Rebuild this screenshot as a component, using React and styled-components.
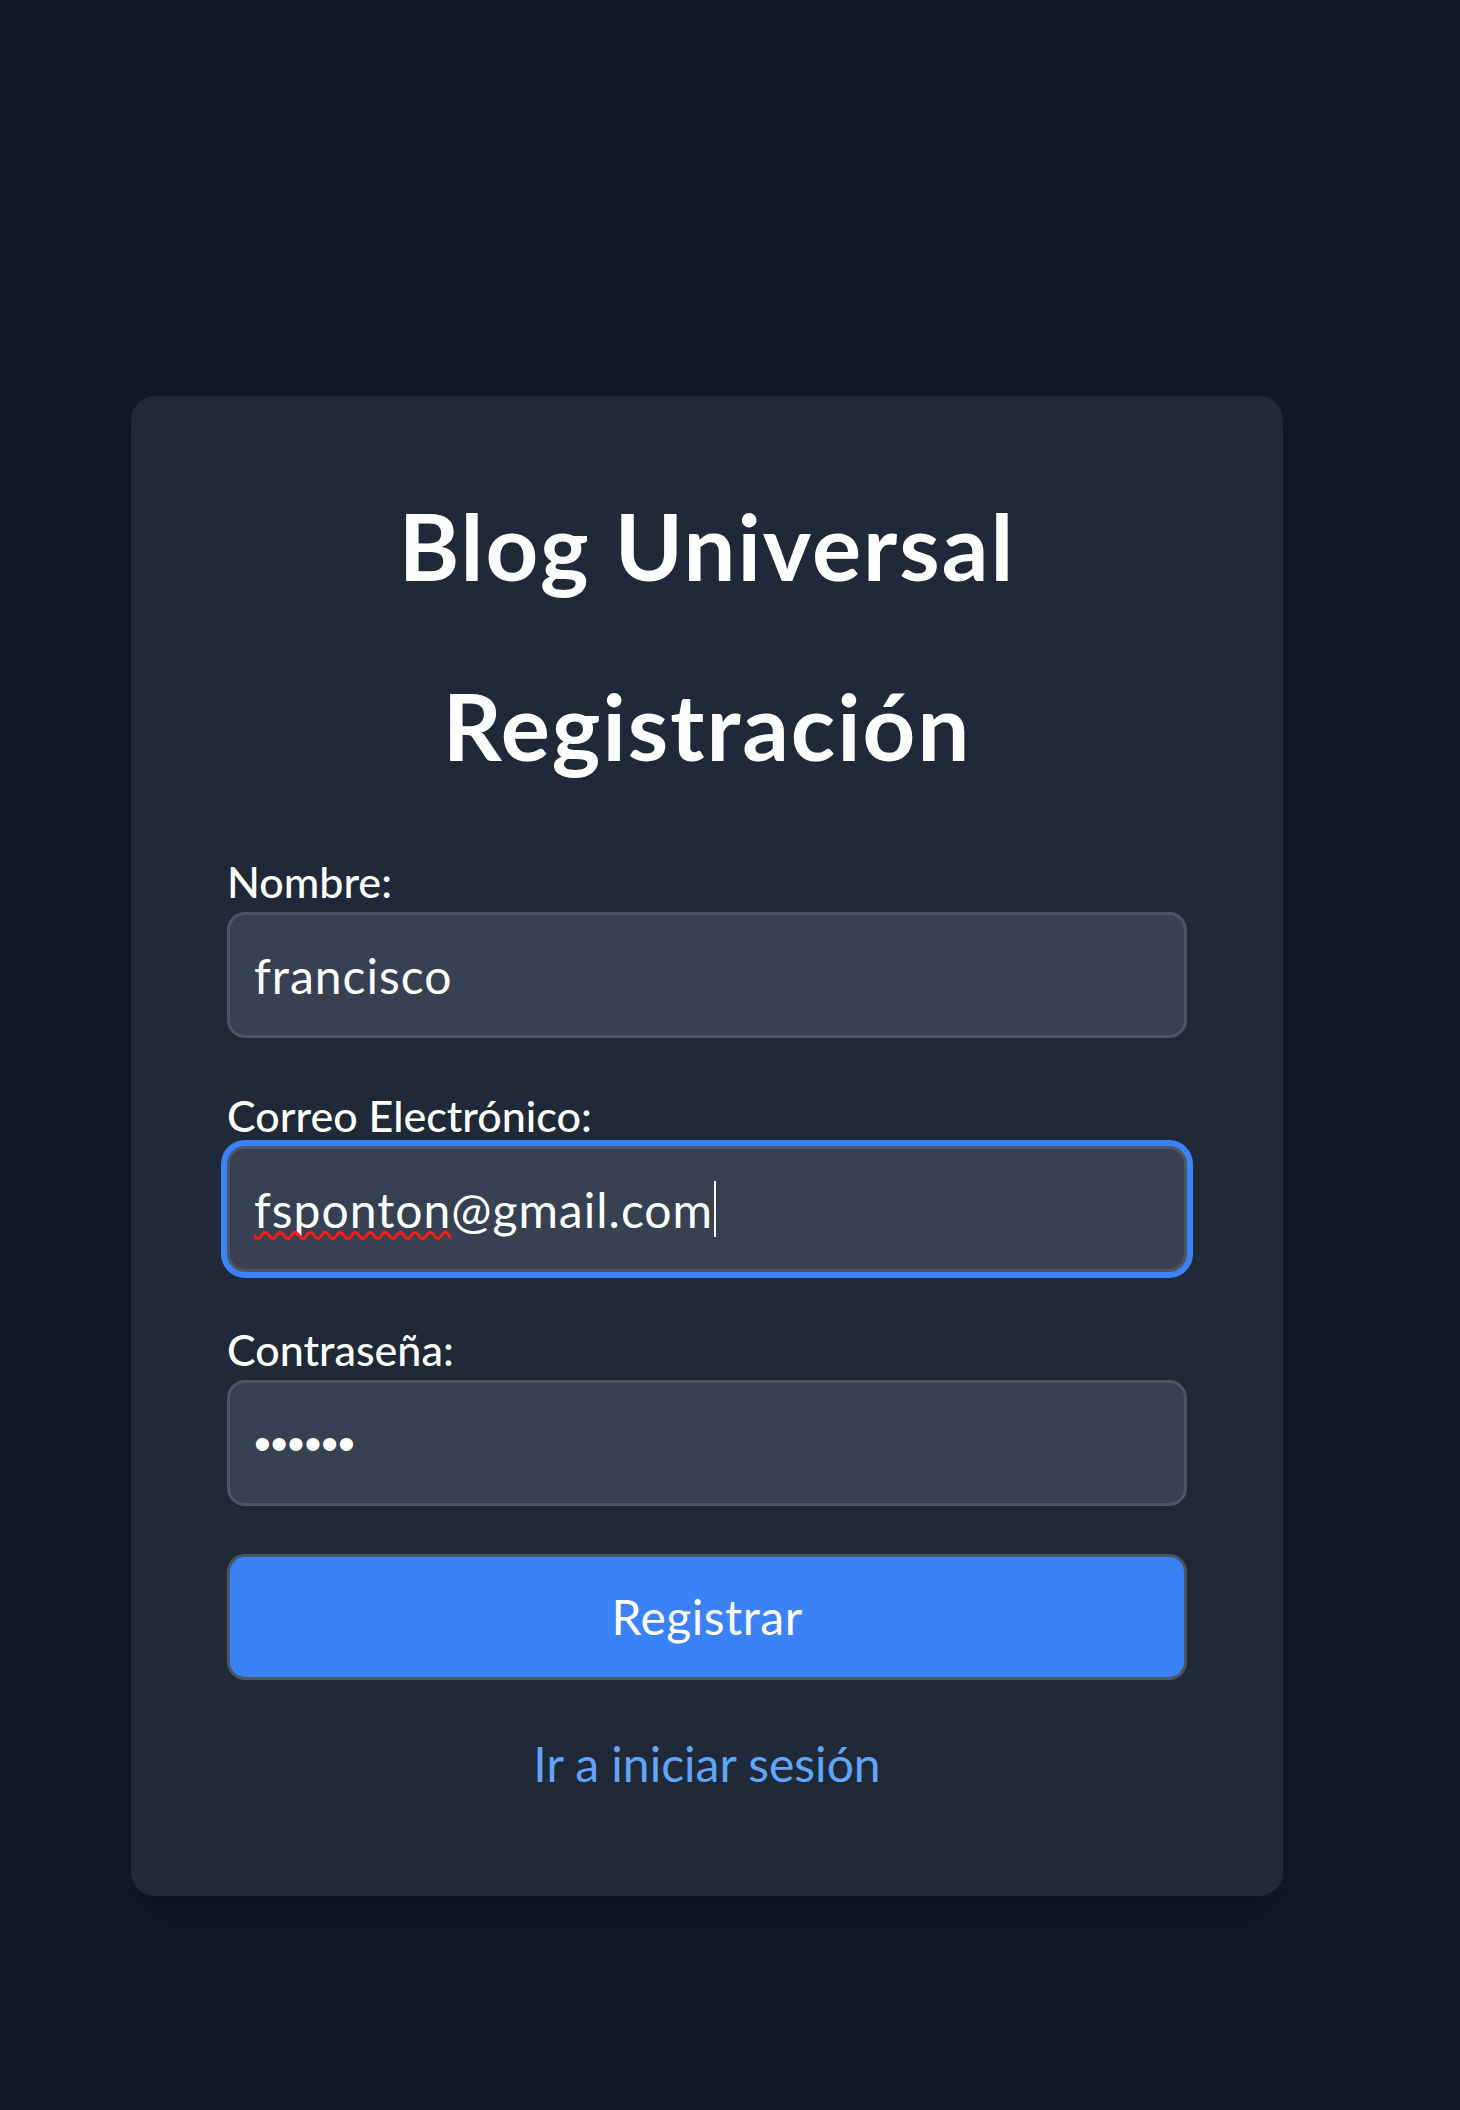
import styled, { createGlobalStyle } from 'styled-components';

const GlobalStyle = createGlobalStyle`
  * {
    box-sizing: border-box;
  }
  html,
  body {
    margin: 0;
    padding: 0;
    background: #111827;
  }
  body {
    font-family: 'Lato', 'Liberation Sans', sans-serif;
    color: #ffffff;
  }
`;

const Page = styled.div`
  min-height: 2110px;
  padding: 396px 0 0 131px;
  background: #111827;
`;

const Card = styled.div`
  width: 1152px;
  padding: 96px;
  background: #1f2937;
  border-radius: 24px;
  box-shadow: 0 30px 45px -9px rgb(0 0 0 / 12%), 0 12px 18px -12px rgb(0 0 0 / 12%);
`;

const Title = styled.h1`
  margin: 0 0 72px;
  font-size: 92px;
  line-height: 108px;
  font-weight: 700;
  letter-spacing: 2px;
  text-align: center;
  color: #ffffff;
`;

const Form = styled.form`
  display: flex;
  flex-direction: column;
`;

const Field = styled.div`
  margin-bottom: 48px;
`;

const Label = styled.label`
  display: block;
  font-size: 43px;
  line-height: 60px;
  font-weight: 500;
  color: #ffffff;
`;

const InputWrap = styled.div`
  position: relative;
`;

const Input = styled.input`
  display: block;
  width: 100%;
  height: 126px;
  padding: 24px;
  font-family: ${(p) => (p.type === 'password' ? "'Liberation Sans', sans-serif" : 'inherit')};
  font-size: 48px;
  line-height: 72px;
  letter-spacing: ${(p) => (p.type === 'password' ? '0' : '1px')};
  color: #ffffff;
  background: #374151;
  border: 3px solid #4b5563;
  border-radius: 18px;
  outline: none;
  box-shadow: ${(p) => (p.$focused ? '0 0 0 6px #3b82f6' : 'none')};
`;

/* spell-check squiggle + caret drawn over the focused e-mail field */
const TypedOverlay = styled.span`
  position: absolute;
  left: 27px;
  top: 0;
  bottom: 0;
  display: flex;
  align-items: center;
  font-size: 48px;
  line-height: 72px;
  letter-spacing: 1px;
  color: transparent;
  white-space: pre;
  pointer-events: none;
`;

const Misspelled = styled.span`
  text-decoration: underline wavy #ff1a1a;
  text-decoration-thickness: 3px;
  text-decoration-skip-ink: none;
  text-underline-offset: 4px;
`;

const Caret = styled.span`
  display: inline-block;
  width: 2px;
  height: 56px;
  margin-left: 1px;
  background: #ffffff;
`;

const SubmitButton = styled.button`
  display: block;
  width: 100%;
  height: 126px;
  padding: 24px;
  font-family: inherit;
  font-size: 48px;
  line-height: 72px;
  letter-spacing: 0.5px;
  color: #ffffff;
  background: #3b82f6;
  border: 3px solid #4b5563;
  border-radius: 18px;
  cursor: pointer;
`;

const SwitchLink = styled.a`
  display: block;
  margin-top: 48px;
  font-size: 48px;
  line-height: 72px;
  text-align: center;
  color: #60a5fa;
  text-decoration: none;
`;

const Registro = () => {
  return (
    <Card>
      <Title>Blog Universal</Title>
      <Title as='h2'>Registración</Title>
      <Form onSubmit={(e) => e.preventDefault()}>
        <Field>
          <Label htmlFor='nombre'>Nombre:</Label>
          <Input id='nombre' type='text' defaultValue='francisco' />
        </Field>
        <Field>
          <Label htmlFor='correo'>Correo Electrónico:</Label>
          <InputWrap>
            <Input
              id='correo'
              type='email'
              defaultValue='fsponton@gmail.com'
              spellCheck={false}
              $focused
            />
            <TypedOverlay aria-hidden='true'>
              <Misspelled>fsponton</Misspelled>@gmail.com
              <Caret />
            </TypedOverlay>
          </InputWrap>
        </Field>
        <Field>
          <Label htmlFor='clave'>Contraseña:</Label>
          <Input id='clave' type='password' defaultValue='123456' />
        </Field>
        <SubmitButton type='submit'>Registrar</SubmitButton>
      </Form>
      <SwitchLink href='#'>Ir a iniciar sesión</SwitchLink>
    </Card>
  );
};

const App = () => {
  return (
    <Page>
      <GlobalStyle />
      <Registro />
    </Page>
  );
};

export default App;
